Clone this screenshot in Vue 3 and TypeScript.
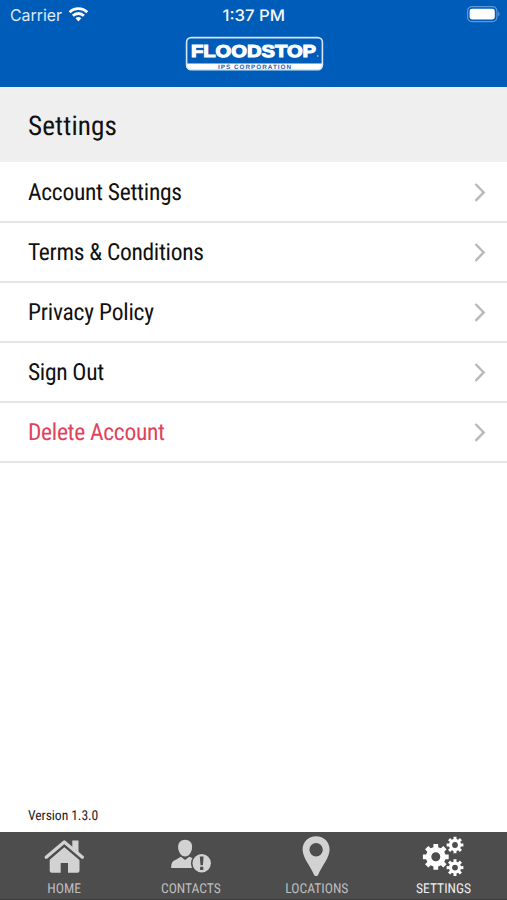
<script setup lang="ts">
interface Row { label: string; width: number; danger?: boolean }
interface Tab { id: string; label: string; x: number; width: number; active?: boolean }

const rows: Row[] = [
  { label: 'Account Settings', width: 154 },
  { label: 'Terms & Conditions', width: 176 },
  { label: 'Privacy Policy', width: 126 },
  { label: 'Sign Out', width: 76.2 },
  { label: 'Delete Account', width: 137, danger: true },
]

const tabs: Tab[] = [
  { id: 'home', label: 'HOME', x: 47.3, width: 33.7 },
  { id: 'contacts', label: 'CONTACTS', x: 34, width: 59.7 },
  { id: 'locations', label: 'LOCATIONS', x: 32.2, width: 63.2 },
  { id: 'settings', label: 'SETTINGS', x: 36, width: 55.1, active: true },
]

/** Outline of a cog with squared teeth and a round hole. */
function gear(cx: number, cy: number, outer: number, root: number, hole: number, teeth = 8): string {
  const step = (Math.PI * 2) / teeth
  const pts: string[] = []
  for (let i = 0; i < teeth; i++) {
    const a = i * step
    const corners: [number, number][] = [
      [root, -0.31], [outer, -0.23], [outer, 0.23], [root, 0.31],
    ]
    for (const [r, o] of corners) {
      pts.push(`${(cx + r * Math.cos(a + o * step)).toFixed(2)} ${(cy + r * Math.sin(a + o * step)).toFixed(2)}`)
    }
  }
  return `M${pts.join('L')}Z M${cx - hole} ${cy}a${hole} ${hole} 0 1 0 ${hole * 2} 0a${hole} ${hole} 0 1 0 ${-hole * 2} 0Z`
}

const gears = [
  gear(55.8, 24.8, 13.1, 9.9, 4.5),
  gear(75, 13, 8.5, 6.1, 2.9),
  gear(75, 35.6, 8.5, 6.1, 2.9),
].join(' ')
</script>

<template>
  <div class="screen">
    <header class="top">
      <svg class="status" width="507" height="32">
        <text x="10" y="20.6" class="sys" textLength="52" lengthAdjust="spacingAndGlyphs">Carrier</text>
        <g fill="none" stroke="#fff" stroke-width="2.9">
          <path d="M69.6 12.2a12.6 12.6 0 0 1 17.6 0" />
          <path d="M72.9 15.8a7.9 7.9 0 0 1 11 0" />
        </g>
        <path d="M75.5 18.3a4.2 4.2 0 0 1 5.8 0l-2.9 3.2z" fill="#fff" />
        <text x="222.5" y="20.6" class="sys clock" textLength="62.5" lengthAdjust="spacingAndGlyphs">1:37 PM</text>
        <rect x="467.6" y="6.6" width="29.3" height="15" rx="4.4" fill="none" stroke="#5f98d6" stroke-width="1.2" />
        <rect x="469.6" y="8.7" width="25.2" height="10.8" rx="2.4" fill="#fff" />
        <path d="M498.2 11.6c1.8.7 1.8 4.3 0 5z" fill="#5f98d6" />
      </svg>
      <svg class="logo" width="140" height="36">
        <path d="M2 27.5h136v2a4.5 4.5 0 0 1-4.5 4.5h-127a4.5 4.5 0 0 1-4.5-4.5z" fill="#fff" />
        <rect x="2.6" y="1.6" width="135.8" height="32.2" rx="4.5" fill="none" stroke="#d5e5f6" stroke-width="1.6" />
        <text x="7" y="20.7" class="brand" textLength="125" lengthAdjust="spacingAndGlyphs">FLOODSTOP</text>
        <circle cx="133.8" cy="20" r=".8" fill="#cfe0f4" />
        <text x="34" y="32.9" class="corp" textLength="73" lengthAdjust="spacing">IPS CORPORATION</text>
      </svg>
    </header>

    <h1 class="title">
      <svg width="200" height="75"><text x="28" y="47.5" textLength="89" lengthAdjust="spacing">Settings</text></svg>
    </h1>

    <ul class="list">
      <li v-for="row in rows" :key="row.label" class="row" :class="{ danger: row.danger }">
        <svg width="300" height="58"><text x="28" y="37" :textLength="row.width" lengthAdjust="spacing">{{ row.label }}</text></svg>
        <svg class="chevron" width="12" height="20"><path d="M1.5 2l8.2 8.4-8.2 8.4" /></svg>
      </li>
    </ul>

    <p class="version">
      <svg width="120" height="20"><text x="28" y="13.7" textLength="70.3" lengthAdjust="spacing">Version 1.3.0</text></svg>
    </p>

    <nav class="tabs">
      <div v-for="tab in tabs" :key="tab.id" class="tab" :class="{ active: tab.active }">
        <svg width="127" height="67">
          <g v-if="tab.id === 'home'">
            <path d="M64.5 14L79.5 27V38.8a2 2 0 0 1-2 2H68V31H60.7V40.8H51.7a2 2 0 0 1-2-2V27z" />
            <path d="M46 27L64.3 11.3L82.8 27" fill="none" stroke="#4d4d4d" stroke-width="6" />
            <path d="M72.3 8.4h6.2v12l-6.2-5.2z" />
            <path d="M46.2 25.2L64.3 9.9L82.4 25.2" class="roof" />
          </g>
          <g v-else-if="tab.id === 'contacts'">
            <path d="M58.1 7.8c4.4 0 7 3 7 7.3 0 4.700-2.900 9.500-7 9.500s-7-4.800-7-9.500c0-4.300 2.600-7.300 7-7.300z" />
            <path d="M44.200 36c0-5.500 1.500-7 4.600-8.300l5.100-2.900 4.200 3.300 4.200-3.300 8.200 3.500v7.700z" />
            <circle cx="74.7" cy="31.3" r="10.7" fill="#4d4d4d" />
            <circle cx="74.7" cy="31.3" r="9.2" />
            <path d="M72.8 24.5h3.8l-.7 8.7h-2.4zM73.1 34.8h3.2v3.1h-3.2z" fill="#4d4d4d" />
          </g>
          <path v-else-if="tab.id === 'locations'" fill-rule="evenodd" d="M63.1 4.3c7.7 0 13.5 5.8 13.5 13.2 0 8-7.5 16.3-11.3 24.9-.9 2.2-3.5 2.2-4.4 0C57.1 33.8 49.6 25.5 49.6 17.5 49.6 10.1 55.4 4.3 63.1 4.3zM63.1 11a6.7 6.7 0 1 0 0 13.4a6.7 6.7 0 1 0 0-13.4z" />
          <path v-else :d="gears" fill-rule="evenodd" />
          <text :x="tab.x" y="61.2" :textLength="tab.width" lengthAdjust="spacing">{{ tab.label }}</text>
        </svg>
      </div>
    </nav>
  </div>
</template>

<style>
body { margin: 0; background: #fff; }
</style>

<style scoped>
.screen {
  width: 507px;
  height: 900px;
  display: flex;
  flex-direction: column;
  overflow: hidden;
  background: #fff;
  font-family: "Roboto Condensed", Roboto, sans-serif;
  font-stretch: 75%;
  text-rendering: geometricPrecision;
}
svg { display: block; flex: none; }
.top {
  height: 87px;
  flex: none;
  background: #005cb9;
  display: flex;
  flex-direction: column;
  align-items: center;
  gap: 4px;
}
.sys {
  font-family: Inter, sans-serif;
  font-stretch: 100%;
  font-size: 16.3px;
  fill: #dce9f7;
}
.clock { font-weight: 500; fill: #f4f8fd; font-size: 15.8px; }
.brand {
  font-family: "Liberation Sans", sans-serif;
  font-stretch: 100%;
  font-weight: 700;
  font-size: 17.2px;
  fill: #fff;
  stroke: #fff;
  stroke-width: 1.1px;
}
.corp {
  font-family: "Liberation Sans", sans-serif;
  font-stretch: 100%;
  font-weight: 700;
  font-size: 6.3px;
  fill: #1c63b2;
}
.title {
  height: 75px;
  margin: 0;
  flex: none;
  background: #efefef;
  font-size: 27.2px;
  font-weight: 400;
}
.title text { fill: #111; }
.list { list-style: none; margin: 0; padding: 1px 0 0; flex: 1; }
.row {
  height: 58px;
  display: flex;
  align-items: center;
  justify-content: space-between;
  border-bottom: 2px solid #e6e6e6;
  padding-right: 21px;
  font-size: 23.5px;
  fill: #111;
}
.danger { fill: #e0435c; }
.chevron path { fill: none; stroke: #b9b9b9; stroke-width: 2.4px; }
.version { margin: 0 0 6px; height: 20px; font-size: 13.6px; fill: #222; }
.tabs {
  height: 67px;
  flex: none;
  display: flex;
  background: #4d4d4d;
  border-bottom: 1px solid #3c3c3c;
}
.tab { width: 126.5px; flex: none; fill: #d2d2d2; font-size: 13.6px; }
.tab svg { overflow: visible; }
.tab text { fill: #bdbdbd; }
.active { fill: #fff; }
.active text { fill: #eee; }
.roof { fill: none; stroke: #d2d2d2; stroke-width: 3.3px; stroke-linecap: round; stroke-linejoin: round; }
</style>
